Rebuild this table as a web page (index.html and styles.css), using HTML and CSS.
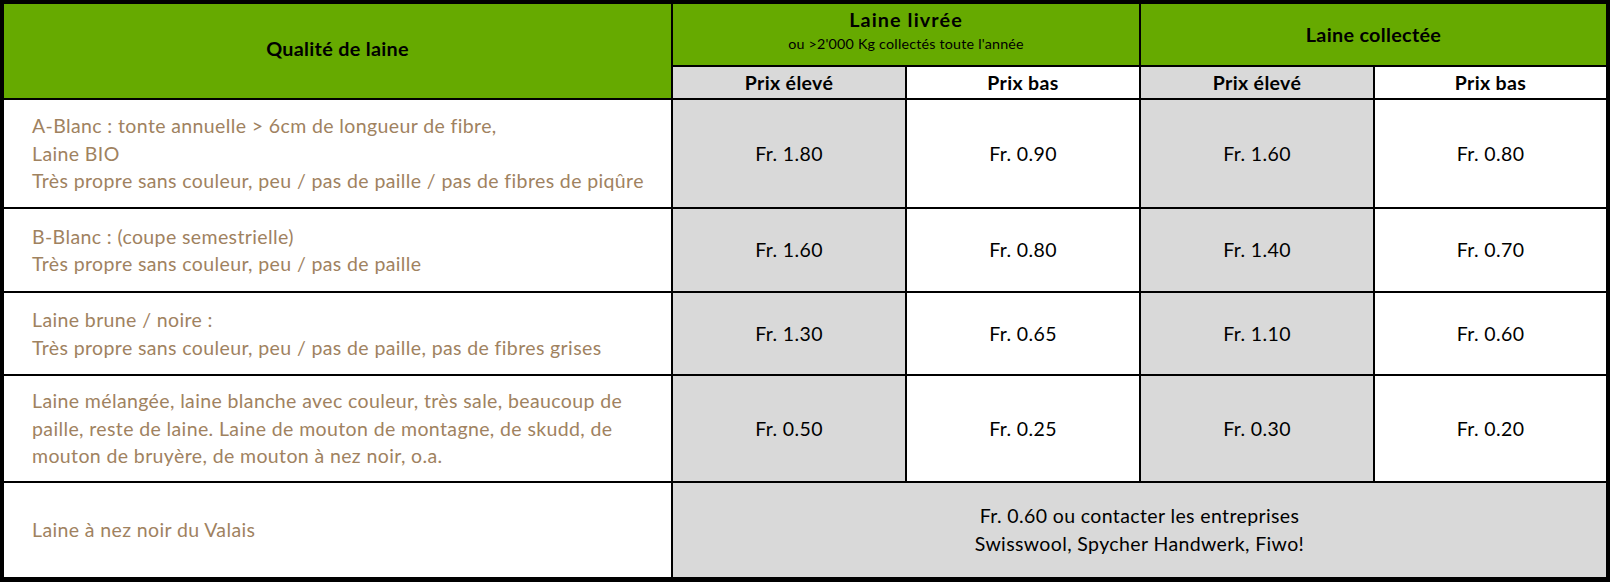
FILE: index.html
```html
<!DOCTYPE html>
<html lang="fr">
<head>
<meta charset="utf-8">
<title>Prix de la laine</title>
<link rel="stylesheet" href="styles.css">
</head>
<body>
<div class="prices" role="table">
  <div class="cell head green quality-head" role="columnheader">Qualité de laine</div>
  <div class="cell head green group-head group-delivered" role="columnheader">
    <div class="h-title">Laine livrée</div>
    <div class="h-sub">ou &gt;2'000 Kg collectés toute l'année</div>
  </div>
  <div class="cell head green group-head" role="columnheader">
    <div class="h-title">Laine collectée</div>
  </div>

  <div class="cell head sub-head gray" role="columnheader">Prix élevé</div>
  <div class="cell head sub-head" role="columnheader">Prix bas</div>
  <div class="cell head sub-head gray" role="columnheader">Prix élevé</div>
  <div class="cell head sub-head" role="columnheader">Prix bas</div>

  <div class="cell quality" role="cell">A-Blanc : tonte annuelle &gt; 6cm de longueur de fibre,<br>Laine BIO<br>Très propre sans couleur, peu / pas de paille / pas de fibres de piqûre</div>
  <div class="cell price gray" role="cell">Fr. 1.80</div>
  <div class="cell price" role="cell">Fr. 0.90</div>
  <div class="cell price gray" role="cell">Fr. 1.60</div>
  <div class="cell price" role="cell">Fr. 0.80</div>

  <div class="cell quality" role="cell">B-Blanc : (coupe semestrielle)<br>Très propre sans couleur, peu / pas de paille</div>
  <div class="cell price gray" role="cell">Fr. 1.60</div>
  <div class="cell price" role="cell">Fr. 0.80</div>
  <div class="cell price gray" role="cell">Fr. 1.40</div>
  <div class="cell price" role="cell">Fr. 0.70</div>

  <div class="cell quality" role="cell">Laine brune / noire :<br>Très propre sans couleur, peu / pas de paille, pas de fibres grises</div>
  <div class="cell price gray" role="cell">Fr. 1.30</div>
  <div class="cell price" role="cell">Fr. 0.65</div>
  <div class="cell price gray" role="cell">Fr. 1.10</div>
  <div class="cell price" role="cell">Fr. 0.60</div>

  <div class="cell quality" role="cell">Laine mélangée, laine blanche avec couleur, très sale, beaucoup de<br>paille, reste de laine. Laine de mouton de montagne, de skudd, de<br>mouton de bruyère, de mouton à nez noir, o.a.</div>
  <div class="cell price gray" role="cell">Fr. 0.50</div>
  <div class="cell price" role="cell">Fr. 0.25</div>
  <div class="cell price gray" role="cell">Fr. 0.30</div>
  <div class="cell price" role="cell">Fr. 0.20</div>

  <div class="cell quality" role="cell">Laine à nez noir du Valais</div>
  <div class="cell price gray span-all" role="cell">Fr. 0.60 ou contacter les entreprises<br>Swisswool, Spycher Handwerk, Fiwo!</div>
</div>
</body>
</html>
```

FILE: styles.css
```css
html, body {
  margin: 0;
  padding: 0;
  background: #ffffff;
}

body {
  font-family: Lato, "Open Sans", "Liberation Sans", sans-serif;
  color: #000000;
}

.prices {
  box-sizing: border-box;
  width: 1610px;
  height: 582px;
  display: grid;
  grid-template-columns: 667px 232px 232px 232px 231px;
  grid-template-rows: 61px 31px 107px 82px 81px 105px 94px;
  gap: 2px;
  padding: 4px 4px 5px 4px;
  background: #000000;
}

.cell {
  display: flex;
  flex-direction: column;
  align-items: center;
  justify-content: center;
  background: #ffffff;
  white-space: nowrap;
  overflow: hidden;
}

.gray { background: #d9d9d9; }
.green { background: #66aa00; }

.head { font-weight: 700; }

.quality-head {
  grid-row: span 2;
  font-size: 19.8px;
  letter-spacing: 0.3px;
  padding-bottom: 6px;
}

.group-head {
  grid-column: span 2;
}

.group-delivered {
  justify-content: flex-start;
  padding-top: 2px;
}

.h-title {
  font-size: 19.8px;
  letter-spacing: 0.3px;
  line-height: 27px;
}

.group-delivered .h-title {
  letter-spacing: 1.1px;
}

.h-sub {
  font-size: 14.3px;
  font-weight: 400;
  letter-spacing: 0.2px;
  line-height: 21px;
}

.sub-head {
  font-size: 19.5px;
  letter-spacing: 0.35px;
  line-height: 24px;
}

.quality {
  align-items: flex-start;
  padding-left: 28px;
  color: #a0825f;
  font-size: 19.5px;
  letter-spacing: 0.38px;
  line-height: 27.5px;
}

.price {
  font-size: 19.5px;
  letter-spacing: 0.38px;
  line-height: 28px;
  text-align: center;
}

.span-all {
  grid-column: span 4;
}
```
